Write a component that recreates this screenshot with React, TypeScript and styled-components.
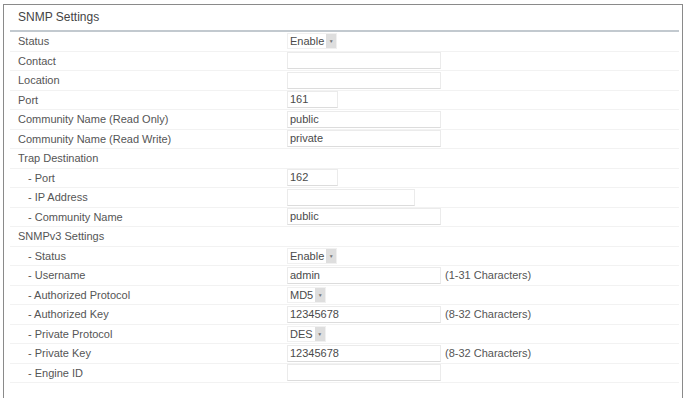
import styled, { createGlobalStyle } from "styled-components";

const GlobalStyle = createGlobalStyle`
  body {
    margin: 0;
    background: #fff;
    font-family: "Liberation Sans", Arial, sans-serif;
    color: #555;
  }
`;

const Panel = styled.div`
  margin: 4px 1px 0 3px;
  border: 1px solid #8a8a8a;
  border-bottom: none;
  height: 420px;
`;

const Header = styled.div`
  height: 25px;
  line-height: 24px;
  padding-left: 14px;
  font-size: 12px;
  color: #444;
`;

const Table = styled.div`
  margin: 0 3px 0 6px;
  border-top: 2px solid #c2c9cf;
`;

const Row = styled.div`
  display: grid;
  grid-template-columns: 277px 1fr;
  align-items: center;
  height: 19.5px;
  box-sizing: border-box;
  border-bottom: 1px solid #f2f2f2;
  font-size: 11px;
`;

const Label = styled.div<{ $sub?: boolean }>`
  padding-left: ${(p) => (p.$sub ? "18px" : "8px")};
  white-space: nowrap;
`;

const Cell = styled.div`
  display: flex;
  align-items: center;
  gap: 4px;
`;

const Input = styled.div<{ $w: number }>`
  width: ${(p) => p.$w}px;
  height: 17px;
  box-sizing: border-box;
  border: 1px solid #ebebeb;
  border-bottom-color: #dcdcdc;
  padding: 0 2px;
  line-height: 15px;
  font-size: 11px;
  color: #4a4a4a;
  background: #fff;
`;

const Select = styled.div`
  display: inline-flex;
  align-items: stretch;
  height: 16px;
  box-sizing: border-box;
  border: 1px solid #f0f0f0;
  font-size: 11px;
  line-height: 14px;
  color: #4a4a4a;
`;

const SelectText = styled.span`
  padding: 0 2px 0 2px;
`;

const Arrow = styled.span`
  width: 10px;
  background: #dedede;
  display: flex;
  align-items: center;
  justify-content: center;
  font-size: 5px;
  color: #777;
`;

const Hint = styled.span`
  font-size: 11px;
  color: #555;
`;

type Field =
  | { kind: "none" }
  | { kind: "input"; w: number; value?: string; hint?: string }
  | { kind: "select"; value: string };

const rows: { label: string; sub?: boolean; field: Field }[] = [
  { label: "Status", field: { kind: "select", value: "Enable" } },
  { label: "Contact", field: { kind: "input", w: 154 } },
  { label: "Location", field: { kind: "input", w: 154 } },
  { label: "Port", field: { kind: "input", w: 51, value: "161" } },
  { label: "Community Name (Read Only)", field: { kind: "input", w: 154, value: "public" } },
  { label: "Community Name (Read Write)", field: { kind: "input", w: 154, value: "private" } },
  { label: "Trap Destination", field: { kind: "none" } },
  { label: "- Port", sub: true, field: { kind: "input", w: 51, value: "162" } },
  { label: "- IP Address", sub: true, field: { kind: "input", w: 128 } },
  { label: "- Community Name", sub: true, field: { kind: "input", w: 154, value: "public" } },
  { label: "SNMPv3 Settings", field: { kind: "none" } },
  { label: "- Status", sub: true, field: { kind: "select", value: "Enable" } },
  { label: "- Username", sub: true, field: { kind: "input", w: 154, value: "admin", hint: "(1-31 Characters)" } },
  { label: "- Authorized Protocol", sub: true, field: { kind: "select", value: "MD5" } },
  { label: "- Authorized Key", sub: true, field: { kind: "input", w: 154, value: "12345678", hint: "(8-32 Characters)" } },
  { label: "- Private Protocol", sub: true, field: { kind: "select", value: "DES" } },
  { label: "- Private Key", sub: true, field: { kind: "input", w: 154, value: "12345678", hint: "(8-32 Characters)" } },
  { label: "- Engine ID", sub: true, field: { kind: "input", w: 154 } },
];

function renderField(f: Field) {
  switch (f.kind) {
    case "input":
      return (
        <>
          <Input $w={f.w}>{f.value}</Input>
          {f.hint && <Hint>{f.hint}</Hint>}
        </>
      );
    case "select":
      return (
        <Select>
          <SelectText>{f.value}</SelectText>
          <Arrow>▼</Arrow>
        </Select>
      );
    default:
      return null;
  }
}

export default function App() {
  return (
    <>
      <GlobalStyle />
      <Panel>
        <Header>SNMP Settings</Header>
        <Table>
          {rows.map((r, i) => (
            <Row key={`row-${i}`}>
              <Label $sub={r.sub}>{r.label}</Label>
              <Cell>{renderField(r.field)}</Cell>
            </Row>
          ))}
        </Table>
      </Panel>
    </>
  );
}
